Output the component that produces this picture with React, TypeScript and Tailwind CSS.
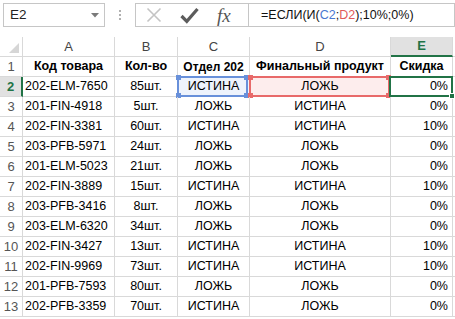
import React from "react";

type Row = [string, string, string, string, string];

const rows: Row[] = [
  ["202-ELM-7650", "85шт.", "ИСТИНА", "ЛОЖЬ", "0%"],
  ["201-FIN-4918", "5шт.", "ЛОЖЬ", "ИСТИНА", "0%"],
  ["202-FIN-3381", "60шт.", "ИСТИНА", "ИСТИНА", "10%"],
  ["203-PFB-5971", "24шт.", "ЛОЖЬ", "ЛОЖЬ", "0%"],
  ["201-ELM-5023", "21шт.", "ЛОЖЬ", "ЛОЖЬ", "0%"],
  ["202-FIN-3889", "15шт.", "ИСТИНА", "ИСТИНА", "10%"],
  ["203-PFB-3416", "8шт.", "ЛОЖЬ", "ЛОЖЬ", "0%"],
  ["203-ELM-6320", "34шт.", "ЛОЖЬ", "ЛОЖЬ", "0%"],
  ["202-FIN-3427", "13шт.", "ИСТИНА", "ИСТИНА", "10%"],
  ["202-FIN-9969", "73шт.", "ИСТИНА", "ИСТИНА", "10%"],
  ["201-PFB-7593", "80шт.", "ЛОЖЬ", "ЛОЖЬ", "0%"],
  ["202-PFB-3359", "70шт.", "ИСТИНА", "ЛОЖЬ", "0%"],
];

const cell = "h-[20px] shrink-0 border-r border-b border-[#d9d9d9] flex items-center relative whitespace-nowrap";

function Corners({ color }: { color: string }) {
  const sq = "absolute w-[5px] h-[5px]";
  return (
    <>
      <div className={`${sq} left-[-3px] top-[-3px]`} style={{ background: color }} />
      <div className={`${sq} right-[-3px] top-[-3px]`} style={{ background: color }} />
      <div className={`${sq} left-[-3px] bottom-[-3px]`} style={{ background: color }} />
      <div className={`${sq} right-[-3px] bottom-[-3px]`} style={{ background: color }} />
    </>
  );
}

export default function App() {
  return (
    <div
      className="w-[455px] h-[319px] overflow-hidden bg-white text-black text-[12.5px]"
      style={{ fontFamily: '"Liberation Sans", Arial, sans-serif' }}
    >
      {/* Formula bar */}
      <div className="h-[37px] flex items-start pt-[3px]">
        <div className="ml-[3px] w-[102px] h-[24px] border border-[#c6c6c6] flex items-center justify-between pl-[6px] pr-[5px]">
          <span className="text-[13.5px] text-[#222]">E2</span>
          <svg width="8" height="5" viewBox="0 0 8 5">
            <path d="M0 0 L8 0 L4 4.5 Z" fill="#7a7a7a" />
          </svg>
        </div>
        <div className="w-[30px] h-[24px] flex flex-col items-center justify-center gap-[2px]">
          <div className="w-[2px] h-[2px] bg-[#b0b0b0]" />
          <div className="w-[2px] h-[2px] bg-[#b0b0b0]" />
          <div className="w-[2px] h-[2px] bg-[#b0b0b0]" />
        </div>
        <div className="w-[114px] h-[24px] border border-[#c6c6c6] flex items-center pl-[10px]">
          <svg width="16" height="16" viewBox="0 0 16 16">
            <path d="M1.5 1.5 L14.5 14.5 M14.5 1.5 L1.5 14.5" stroke="#c4c4c4" strokeWidth="1.6" />
          </svg>
          <svg className="ml-[18px]" width="19" height="17" viewBox="0 0 19 17">
            <path d="M1.5 9 L6.8 14.3 L17.5 2" stroke="#5c5c5c" strokeWidth="3.2" fill="none" strokeLinejoin="miter" />
          </svg>
          <span
            className="ml-[18px] text-[19px] italic text-[#555] leading-none"
            style={{ fontFamily: '"Liberation Serif", "Times New Roman", serif' }}
          >
            fx
          </span>
        </div>
        <div className="flex-1 h-[24px] border border-l-0 border-[#c6c6c6] flex items-center pl-[12px] text-[12.5px] text-[#111]">
          <span>=ЕСЛИ(И(</span>
          <span className="text-[#4a78d0]">C2</span>
          <span>;</span>
          <span className="text-[#e05a5a]">D2</span>
          <span>);10%;0%)</span>
        </div>
      </div>

      {/* Column headers */}
      <div className="flex h-[20px] text-[13px] text-[#444]">
        <div className="w-[23px] h-[20px] shrink-0 border-r border-b border-[#d9d9d9] relative">
          <svg className="absolute right-[3px] bottom-[3px]" width="10" height="10" viewBox="0 0 10 10">
            <path d="M10 0 L10 10 L0 10 Z" fill="#d6d6d6" />
          </svg>
        </div>
        <div className="w-[92px] h-[20px] shrink-0 border-r border-b border-[#d9d9d9] flex items-center justify-center">A</div>
        <div className="w-[63px] h-[20px] shrink-0 border-r border-b border-[#d9d9d9] flex items-center justify-center">B</div>
        <div className="w-[72px] h-[20px] shrink-0 border-r border-b border-[#d9d9d9] flex items-center justify-center">C</div>
        <div className="w-[141px] h-[20px] shrink-0 border-r border-b border-[#d9d9d9] flex items-center justify-center">D</div>
        <div className="w-[62px] h-[20px] shrink-0 border-r border-[#d9d9d9] border-b-2 border-b-[#217346] bg-[#e1e1e1] flex items-center justify-center font-bold text-[#217346]">
          E
        </div>
        <div className="flex-1 h-[20px] border-b border-[#d9d9d9]" />
      </div>

      {/* Header row 1 */}
      <div className="flex">
        <div className={`${cell} w-[23px] justify-center text-[13px] text-[#555]`}>1</div>
        <div className={`${cell} w-[92px] justify-center font-bold`}>Код товара</div>
        <div className={`${cell} w-[63px] justify-center font-bold`}>Кол-во</div>
        <div className={`${cell} w-[72px] justify-center font-bold text-[12px]`}>Отдел 202</div>
        <div className={`${cell} w-[141px] justify-center font-bold`}>Финальный продукт</div>
        <div className={`${cell} w-[62px] justify-center font-bold`}>Скидка</div>
        <div className={`${cell} flex-1 border-r-0`} />
      </div>

      {rows.map((r, i) => {
        const n = i + 2;
        const sel = n === 2;
        return (
          <div key={n} className="flex">
            <div
              className={`${cell} w-[23px] justify-center text-[13px] ${
                sel ? "bg-[#e1e1e1] text-[#217346] font-bold border-r-2 border-r-[#217346]" : "text-[#555]"
              }`}
            >
              {n}
            </div>
            <div className={`${cell} w-[92px] pl-[2px] overflow-hidden`}>{r[0]}</div>
            <div className={`${cell} w-[63px] justify-center`}>{r[1]}</div>
            <div className={`${cell} w-[72px] justify-center ${sel ? "bg-[#eef3fc]" : ""}`}>
              {r[2]}
              {sel && (
                <div className="absolute left-[-1px] top-[-1px] right-[1px] bottom-[-1px] border-2 border-[#6890da]">
                  <Corners color="#6890da" />
                </div>
              )}
            </div>
            <div className={`${cell} w-[141px] justify-center ${sel ? "bg-[#fdeded]" : ""}`}>
              {r[3]}
              {sel && (
                <div className="absolute left-[-1px] top-[-1px] right-[0px] bottom-[-1px] border-2 border-[#e86a6a]">
                  <Corners color="#e86a6a" />
                </div>
              )}
            </div>
            <div className={`${cell} w-[62px] justify-end pr-[4px]`}>
              {r[4]}
              {sel && (
                <div className="absolute left-[-2px] top-[-1px] right-[-1px] bottom-[-1px] border-2 border-[#217346] z-10">
                  <div className="absolute right-[-4px] bottom-[-4px] w-[6px] h-[6px] bg-[#217346] border border-white" />
                </div>
              )}
            </div>
            <div className={`${cell} flex-1 border-r-0`} />
          </div>
        );
      })}
    </div>
  );
}
